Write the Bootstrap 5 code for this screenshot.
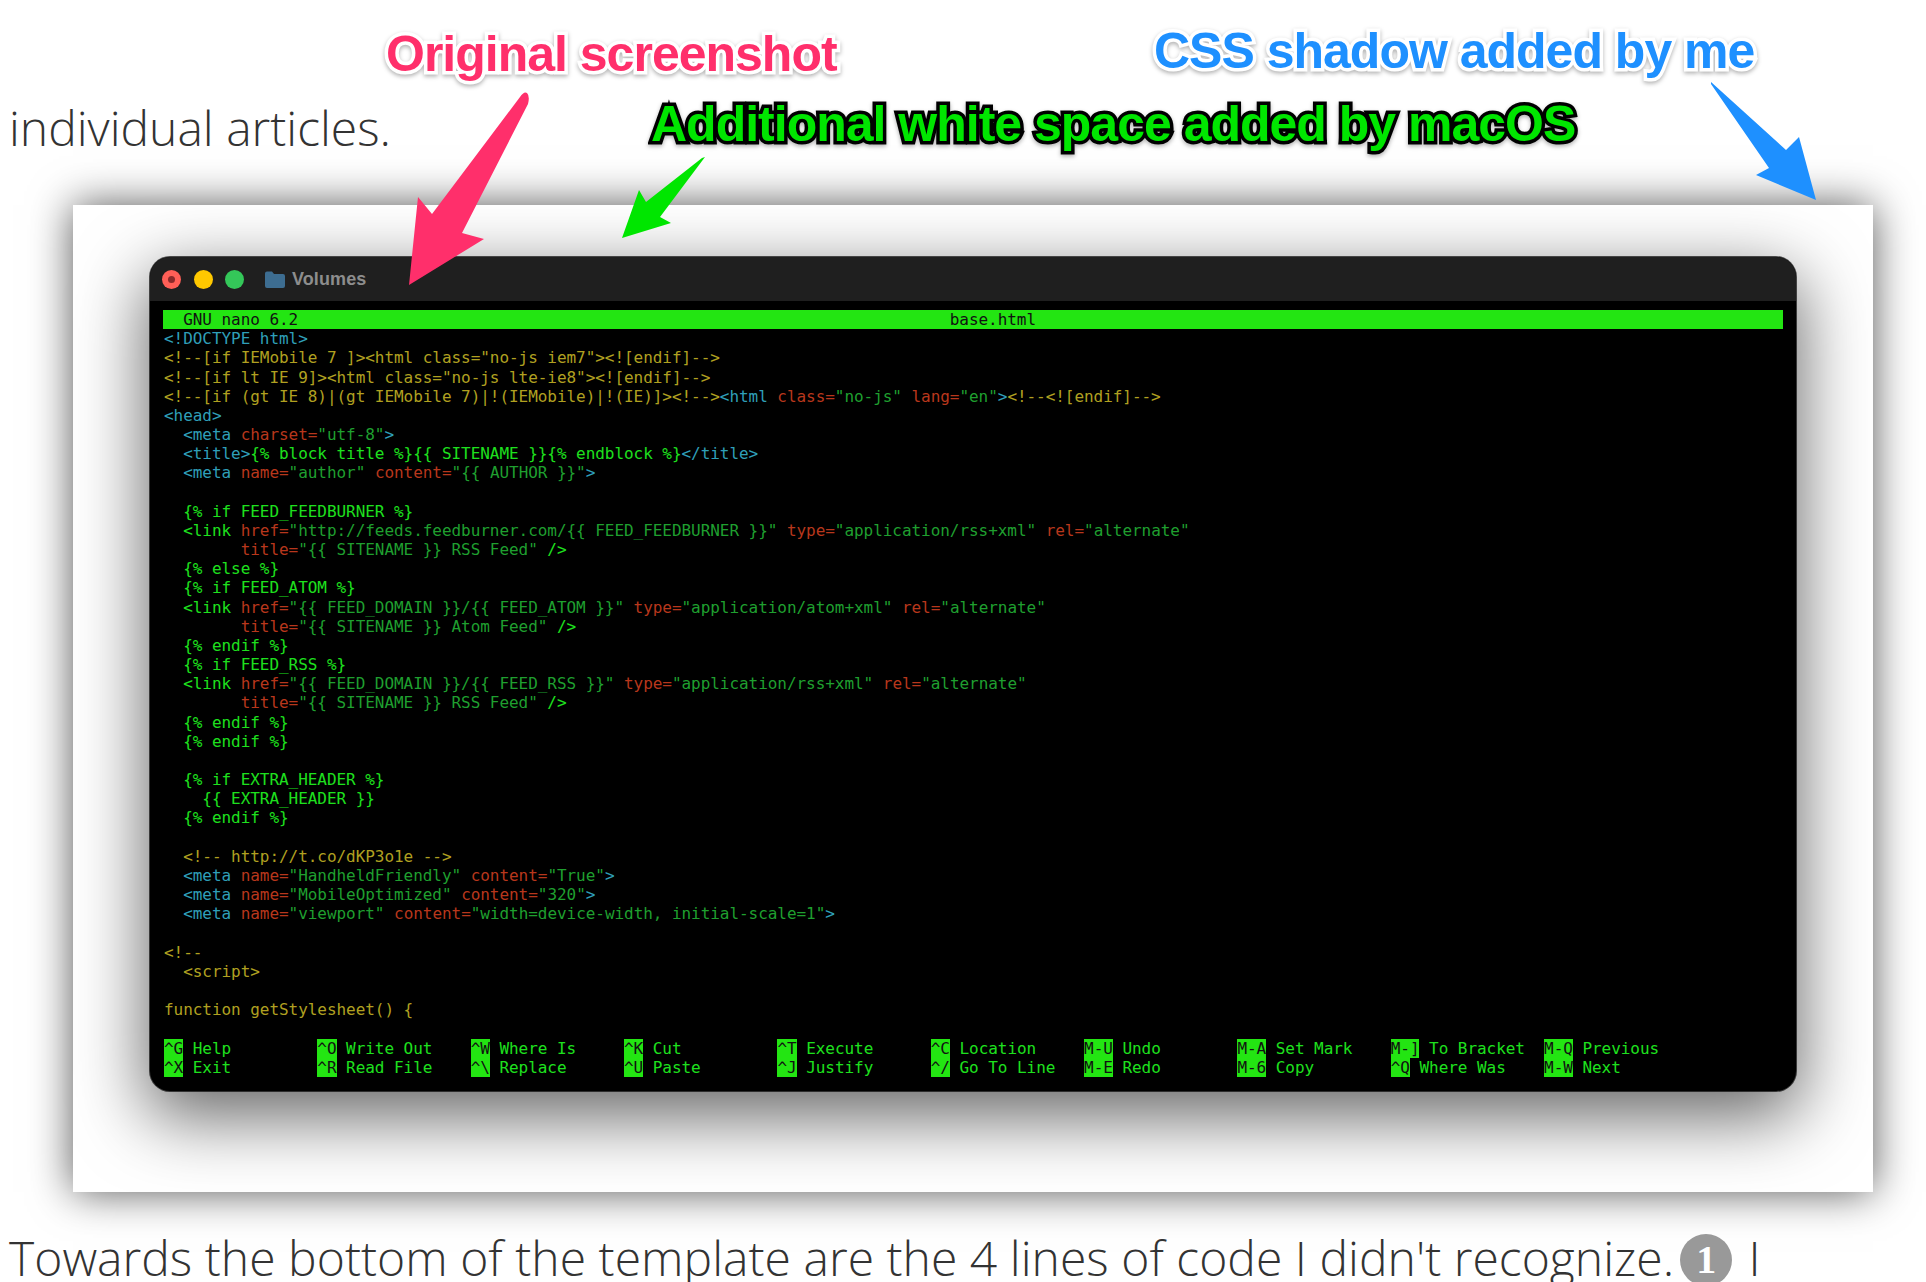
<!DOCTYPE html>
<html lang="en">
<head>
<meta charset="utf-8">
<title>Screenshot</title>
<link href="https://cdn.jsdelivr.net/npm/bootstrap@5.3.0/dist/css/bootstrap.min.css" rel="stylesheet">
<style>
html,body{margin:0;background:#fff;}
.pg{position:relative;width:1926px;height:1282px;overflow:hidden;font-family:"Open Sans",sans-serif;font-weight:300;color:#333;font-size:48px;}
.prose{margin:0;padding-left:9px;line-height:66px;white-space:nowrap;}
.prose-top{padding-top:95px;height:205px;}
.prose-bot{padding-top:33px;letter-spacing:.03px;}
.shot{margin:0 0 0 73px;width:1800px;height:987px;background:#fff;box-shadow:0 0 40px rgba(0,0,0,.66);padding:52px 77px 0 77px;}
.term{height:834px;border-radius:20px;background:#000;overflow:hidden;box-shadow:0 22px 70px 4px rgba(0,0,0,.6),0 0 0 1px #555;}
.tbar{height:44px;background:#1f1f1f;padding-left:12px;gap:12.5px;}
.dot{width:19px;height:19px;border-radius:50%;}
.dot-r{background:#ff5f57;position:relative;}
.dot-r::after{content:"";position:absolute;left:6px;top:6px;width:7px;height:7px;border-radius:50%;background:#8a2a2a;}
.dot-y{background:#ffc800;}
.dot-g{background:#34c759;}
.ttl{font:700 18px "Liberation Sans",sans-serif;letter-spacing:.1px;color:#8d8d8d;margin-left:-5px;}
.fold{width:20px;height:17px;margin-left:8px;}
.screen{padding:9px 0 0 14px;}
.grid-txt{margin:0;font:400 16px/19.17px "DejaVu Sans Mono",monospace;letter-spacing:-.05px;color:#1f9f2f;white-space:pre;overflow:visible;}
.nbar{display:block;width:1620px;margin-left:-1px;padding-left:1px;background:#23e512;color:#111;}
.k{background:#23e512;color:#111;}
.t{color:#2f9fb8}.a{color:#b8371c}.s{color:#1f9f2f}.b{color:#1ee01e}.y{color:#b0a020}
.cnum{display:inline-block;width:52px;height:52px;border-radius:50%;background:#999;color:#fff;font:700 40px/52px "Liberation Serif",serif;text-align:center;vertical-align:3px;margin:0 4px 0 6px;letter-spacing:0;}
.note{position:absolute;font-family:"Liberation Sans",sans-serif;font-weight:700;white-space:nowrap;line-height:1;paint-order:stroke fill;letter-spacing:-1px;}
.n-pink{left:386px;top:29px;font-size:50px;color:#ff2f6b;-webkit-text-stroke:7px #fff;filter:drop-shadow(0 2px 2px rgba(0,0,0,.3));}
.n-blue{left:1154px;top:26px;font-size:50px;color:#1e90ff;-webkit-text-stroke:7px #fff;filter:drop-shadow(0 2px 2px rgba(0,0,0,.3));}
.n-green{left:651px;top:99px;font-size:50px;color:#00e600;-webkit-text-stroke:7px #000;filter:drop-shadow(0 2px 2px rgba(0,0,0,.3));}
.arrows{position:absolute;left:0;top:0;width:1926px;height:1282px;pointer-events:none;}
</style>
</head>
<body>
<div class="pg">
  <p class="prose prose-top">individual articles.</p>
  <div class="shot">
    <div class="term">
      <div class="tbar d-flex align-items-center">
        <span class="dot dot-r"></span><span class="dot dot-y"></span><span class="dot dot-g"></span>
        <svg class="fold" viewBox="0 0 20 17"><path d="M0 2.5Q0 .5 2 .5H7L9 3H18Q20 3 20 5V15Q20 17 18 17H2Q0 17 0 15Z" fill="#3d6d91"/></svg>
        <span class="ttl">Volumes</span>
      </div>
      <div class="screen">
<pre class="grid-txt"><span class="nbar">  GNU nano 6.2                                                                    base.html</span><span class="t">&lt;!DOCTYPE html&gt;</span>
<span class="y">&lt;!--[if IEMobile 7 ]&gt;&lt;html class="no-js iem7"&gt;&lt;![endif]--&gt;</span>
<span class="y">&lt;!--[if lt IE 9]&gt;&lt;html class="no-js lte-ie8"&gt;&lt;![endif]--&gt;</span>
<span class="y">&lt;!--[if (gt IE 8)|(gt IEMobile 7)|!(IEMobile)|!(IE)]&gt;&lt;!--&gt;</span><span class="t">&lt;html</span> <span class="a">class=</span><span class="s">"no-js"</span> <span class="a">lang=</span><span class="s">"en"</span><span class="t">&gt;</span><span class="y">&lt;!--&lt;![endif]--&gt;</span>
<span class="t">&lt;head&gt;</span>
  <span class="t">&lt;meta</span> <span class="a">charset=</span><span class="s">"utf-8"</span><span class="t">&gt;</span>
  <span class="t">&lt;title&gt;</span><span class="b">{% block title %}{{ SITENAME }}{% endblock %}</span><span class="t">&lt;/title&gt;</span>
  <span class="t">&lt;meta</span> <span class="a">name=</span><span class="s">"author"</span> <span class="a">content=</span><span class="s">"{{ AUTHOR }}"</span><span class="t">&gt;</span>

  <span class="b">{% if FEED_FEEDBURNER %}</span>
  <span class="b">&lt;link</span> <span class="a">href=</span><span class="s">"http://feeds.feedburner.com/{{ FEED_FEEDBURNER }}"</span> <span class="a">type=</span><span class="s">"application/rss+xml"</span> <span class="a">rel=</span><span class="s">"alternate"</span>
        <span class="a">title=</span><span class="s">"{{ SITENAME }} RSS Feed"</span> <span class="b">/&gt;</span>
  <span class="b">{% else %}</span>
  <span class="b">{% if FEED_ATOM %}</span>
  <span class="b">&lt;link</span> <span class="a">href=</span><span class="s">"{{ FEED_DOMAIN }}/{{ FEED_ATOM }}"</span> <span class="a">type=</span><span class="s">"application/atom+xml"</span> <span class="a">rel=</span><span class="s">"alternate"</span>
        <span class="a">title=</span><span class="s">"{{ SITENAME }} Atom Feed"</span> <span class="b">/&gt;</span>
  <span class="b">{% endif %}</span>
  <span class="b">{% if FEED_RSS %}</span>
  <span class="b">&lt;link</span> <span class="a">href=</span><span class="s">"{{ FEED_DOMAIN }}/{{ FEED_RSS }}"</span> <span class="a">type=</span><span class="s">"application/rss+xml"</span> <span class="a">rel=</span><span class="s">"alternate"</span>
        <span class="a">title=</span><span class="s">"{{ SITENAME }} RSS Feed"</span> <span class="b">/&gt;</span>
  <span class="b">{% endif %}</span>
  <span class="b">{% endif %}</span>

  <span class="b">{% if EXTRA_HEADER %}</span>
    <span class="b">{{ EXTRA_HEADER }}</span>
  <span class="b">{% endif %}</span>

  <span class="y">&lt;!-- http://t.co/dKP3o1e --&gt;</span>
  <span class="t">&lt;meta</span> <span class="a">name=</span><span class="s">"HandheldFriendly"</span> <span class="a">content=</span><span class="s">"True"</span><span class="t">&gt;</span>
  <span class="t">&lt;meta</span> <span class="a">name=</span><span class="s">"MobileOptimized"</span> <span class="a">content=</span><span class="s">"320"</span><span class="t">&gt;</span>
  <span class="t">&lt;meta</span> <span class="a">name=</span><span class="s">"viewport"</span> <span class="a">content=</span><span class="s">"width=device-width, initial-scale=1"</span><span class="t">&gt;</span>

<span class="y">&lt;!--</span>
  <span class="y">&lt;script&gt;</span>

<span class="y">function getStylesheet() {</span>

<span class="k">^G</span><span class="b"> Help         </span><span class="k">^O</span><span class="b"> Write Out    </span><span class="k">^W</span><span class="b"> Where Is     </span><span class="k">^K</span><span class="b"> Cut          </span><span class="k">^T</span><span class="b"> Execute      </span><span class="k">^C</span><span class="b"> Location     </span><span class="k">M-U</span><span class="b"> Undo        </span><span class="k">M-A</span><span class="b"> Set Mark    </span><span class="k">M-]</span><span class="b"> To Bracket  </span><span class="k">M-Q</span><span class="b"> Previous</span>
<span class="k">^X</span><span class="b"> Exit         </span><span class="k">^R</span><span class="b"> Read File    </span><span class="k">^\</span><span class="b"> Replace      </span><span class="k">^U</span><span class="b"> Paste        </span><span class="k">^J</span><span class="b"> Justify      </span><span class="k">^/</span><span class="b"> Go To Line   </span><span class="k">M-E</span><span class="b"> Redo        </span><span class="k">M-6</span><span class="b"> Copy        </span><span class="k">^Q</span><span class="b"> Where Was    </span><span class="k">M-W</span><span class="b"> Next</span></pre>
      </div>
    </div>
  </div>
  <p class="prose prose-bot">Towards the bottom of the template are the 4 lines of code I didn't recognize.<span class="cnum">1</span> I</p>

  <svg class="arrows" viewBox="0 0 1926 1282">
    <path d="M527 93Q530 96 528 104L462 233L484 239L409 285L418 197L432 214L520 97Q524 91 527 93Z" fill="#ff2f6b"/>
    <path d="M705 157L660 217L671 223L622 238L639 190L646 202L702 158Z" fill="#00e600"/>
    <path d="M1711 82L1786 150L1799 137L1816 200L1756 175L1769 168L1711 84Z" fill="#1e90ff"/>
  </svg>
  <div class="note n-pink">Original screenshot</div>
  <div class="note n-green">Additional white space added by macOS</div>
  <div class="note n-blue">CSS shadow added by me</div>
</div>
<script src="https://cdn.jsdelivr.net/npm/bootstrap@5.3.0/dist/js/bootstrap.bundle.min.js"></script>
</body>
</html>
